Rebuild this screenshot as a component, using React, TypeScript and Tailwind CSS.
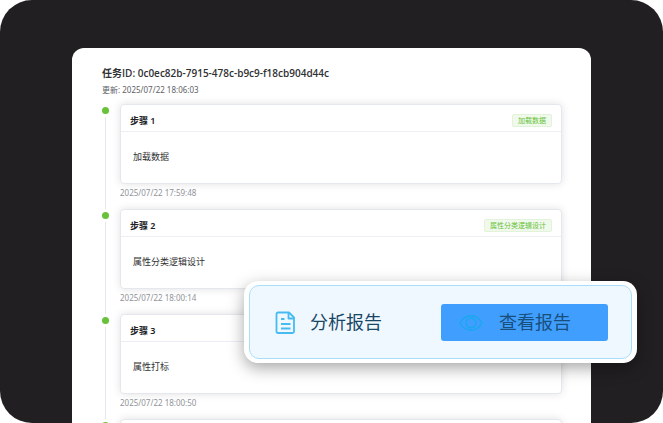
interface Step {
  title?: string;
  content?: string;
  tag?: string;
  time?: string;
}

const steps: Step[] = [
  { title: "步骤 1", content: "加载数据", tag: "加载数据", time: "2025/07/22 17:59:48" },
  { title: "步骤 2", content: "属性分类逻辑设计", tag: "属性分类逻辑设计", time: "2025/07/22 18:00:14" },
  { title: "步骤 3", content: "属性打标", time: "2025/07/22 18:00:50" },
  {},
];

export default function App() {
  return (
    <div className="relative h-screen overflow-hidden rounded-[32px] bg-[#221f22] px-[72px] pt-12 font-['Noto_Sans','Noto_Sans_CJK_SC',sans-serif]">
      <main className="h-full rounded-t-xl bg-white pt-[18px] pr-[29px] pl-[30px]">
        <h1 className="font-['Open_Sans','Noto_Sans_CJK_SC',sans-serif] text-[10px] leading-[14px] font-semibold text-[#303133]">任务ID: 0c0ec82b-7915-478c-b9c9-f18cb904d44c</h1>
        <p className="mt-1 text-[8px] leading-3 text-[#606266]">更新: 2025/07/22 18:06:03</p>
        <ol className="mt-2">
          {steps.map((step, index) => <TimelineItem key={index} step={step} />)}
        </ol>
      </main>
      <ReportBar />
    </div>
  )
}

function TimelineItem({ step }: { step: Step }) {
  return (
    <li className="flex h-[105px] gap-[11px]">
      <div className="flex w-[7px] flex-col items-center gap-[3px] pt-[3px]">
        <span className="size-[7px] shrink-0 rounded-full bg-[#67c23a]" />
        <span className="w-px grow bg-[#e4e7ed]" />
      </div>
      <div className="min-w-0 grow">
        <section className="rounded-[4px] border border-[#e4e7ed] bg-white shadow-[0_0_8px_rgba(0,0,0,0.12)]">
          <header className="flex h-[27px] items-center justify-between border-b border-[#ebeef5] px-[9px] pt-[5px]">
            <h2 className="text-[9px] leading-3 font-semibold text-[#202124]">{step.title}</h2>
            {step.tag && <span className="rounded-[2px] border border-[#e1f3d8] bg-[#f0f9eb] px-[5px] text-[7px] leading-[11px] text-[#67c23a]">{step.tag}</span>}
          </header>
          <p className="min-h-[51px] px-3 pt-[18px] pb-5 text-[9px] leading-[13px] text-[#303133]">{step.content}</p>
        </section>
        <time className="mt-[3px] block text-[8px] leading-[11px] text-[#909399]">{step.time}</time>
      </div>
    </li>
  )
}

function ReportBar() {
  return (
    <div className="absolute top-[281px] right-[26px] left-[244px] rounded-[14px] bg-white px-[5px] py-1 shadow-[0_5px_16px_rgba(0,0,0,0.35)]">
      <div className="flex h-[74px] items-center justify-between rounded-[10px] border border-[#a8def9] bg-[#f0f8ff] pr-[23px] pl-[25px]">
        <div className="flex items-center gap-[14px]">
          <FileIcon />
          <span className="text-lg leading-6 text-[#184766]">分析报告</span>
        </div>
        <button type="button" className="flex h-[37px] w-[167px] items-center gap-4 rounded-[3px] bg-[#409eff] pl-[18px] text-lg leading-6 text-[#184f7c]">
          <EyeIcon />
          查看报告
        </button>
      </div>
    </div>
  )
}

function FileIcon() {
  return (
    <svg width="21" height="24" viewBox="0 0 21 24" fill="none" stroke="#45bbf2" strokeWidth="1.8" strokeLinejoin="round" aria-hidden="true">
      <path d="M3 2.500h11l5 5v14a1.500 1.500 0 0 1-1.500 1.500h-14.500a1.500 1.500 0 0 1-1.500-1.500v-17.500a1.500 1.500 0 0 1 1.500-1.500z" />
      <path d="M13.500 3v5.500h5.500M6 9h3.500M6 14h9.500M6 18.500h9.500" />
    </svg>
  )
}

function EyeIcon() {
  return (
    <svg width="24" height="18" viewBox="0 0 24 18" fill="none" stroke="#18a8ee" strokeWidth="1.4" aria-hidden="true">
      <path d="M1 10c2.500-4.700 6.300-7.200 11-7.200s8.500 2.500 11 7.200c-2.500 4.700-6.300 7.200-11 7.200s-8.500-2.500-11-7.200z" />
      <circle cx="12" cy="10" r="4.800" />
    </svg>
  )
}
